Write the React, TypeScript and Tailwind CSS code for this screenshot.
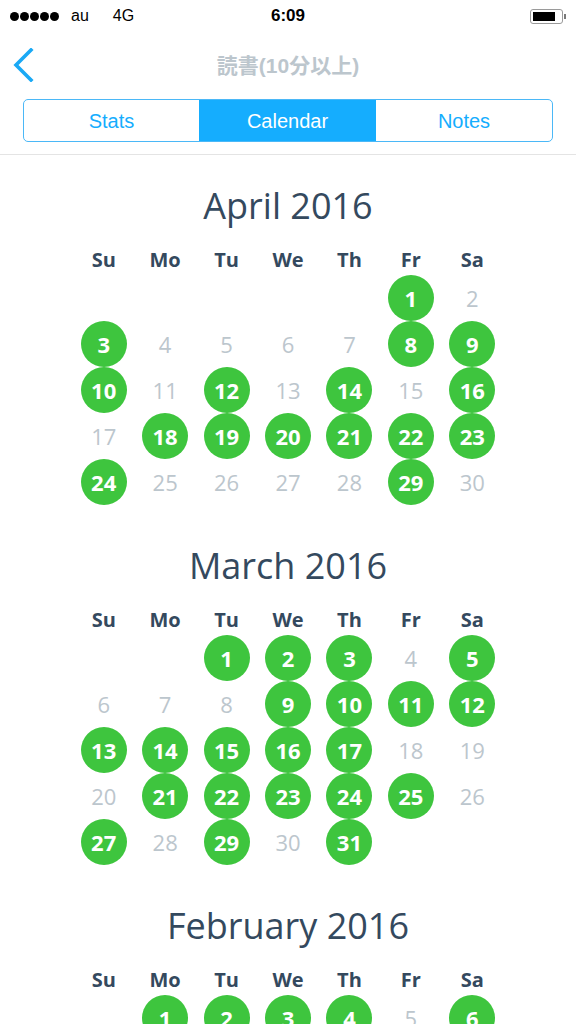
import React from "react";

type Month = { title: string; startDay: number; days: number; done: number[] };

const months: Month[] = [
  { title: "April 2016", startDay: 5, days: 30, done: [1, 3, 8, 9, 10, 12, 14, 16, 18, 19, 20, 21, 22, 23, 24, 29] },
  { title: "March 2016", startDay: 2, days: 31, done: [1, 2, 3, 5, 9, 10, 11, 12, 13, 14, 15, 16, 17, 21, 22, 23, 24, 25, 27, 29, 31] },
  { title: "February 2016", startDay: 1, days: 29, done: [1, 2, 3, 4, 6, 7, 8, 10, 11, 12, 14, 15, 17, 18, 20, 21, 22, 24, 25, 27, 28] },
];

const dayNames = ["Su", "Mo", "Tu", "We", "Th", "Fr", "Sa"];

function MonthBlock({ m }: { m: Month }) {
  const cells: (number | null)[] = [];
  for (let i = 0; i < m.startDay; i++) cells.push(null);
  for (let d = 1; d <= m.days; d++) cells.push(d);
  return (
    <div className="pb-[36px]">
      <div className="h-[50px] mb-[14px] flex items-center justify-center text-[36px] text-[#34495e] leading-none">
        {m.title}
      </div>
      <div className="w-[430px] mx-auto grid grid-cols-7">
        {dayNames.map((d) => (
          <div key={d} className="h-[30px] flex items-center justify-center text-[20px] font-bold text-[#34495e]">
            {d}
          </div>
        ))}
        {cells.map((d, i) => (
          <div key={i} className="h-[46px] flex items-center justify-center">
            {d === null ? null : m.done.includes(d) ? (
              <div className="w-[46px] h-[46px] rounded-full bg-[#3ec53e] flex items-center justify-center text-white font-bold text-[22px] leading-none">
                {d}
              </div>
            ) : (
              <span className="text-[22px] text-[#bcc6cd] leading-none">{d}</span>
            )}
          </div>
        ))}
      </div>
    </div>
  );
}

export default function App() {
  return (
    <div className="w-[576px] h-[1024px] overflow-hidden bg-white" style={{ fontFamily: '"Open Sans", sans-serif' }}>
      {/* status bar */}
      <div className="h-[32px] relative flex items-center px-[10px] text-black" style={{ fontFamily: '"Liberation Sans", Arial, sans-serif' }}>
        <div className="flex items-center gap-[1px]">
          {[0, 1, 2, 3, 4].map((i) => (
            <div key={i} className="w-[9px] h-[9px] rounded-full bg-black" />
          ))}
        </div>
        <span className="ml-[12px] text-[16px]">au</span>
        <span className="ml-[24px] text-[16px]">4G</span>
        <div className="absolute left-0 right-0 top-0 h-[32px] flex items-center justify-center text-[17px] font-bold pointer-events-none">
          6:09
        </div>
        <div className="ml-auto flex items-center">
          <div className="w-[33px] h-[15px] border border-[#9a9a9a] rounded-[3px] p-[2px]">
            <div className="w-[22px] h-full bg-black" />
          </div>
          <div className="w-[2px] h-[5px] bg-[#7a7a7a] ml-[1px]" />
        </div>
      </div>
      {/* nav */}
      <div className="h-[67px] relative flex items-center justify-center">
        <svg className="absolute left-[12px] top-[16px]" width="22" height="34" viewBox="0 0 22 34">
          <path d="M19 2 L4 17 L19 32" fill="none" stroke="#1aa9f5" strokeWidth="3.6" strokeLinecap="square" />
        </svg>
        <div
          className="text-[21px] font-bold text-[#bcc6cd]"
          style={{ fontFamily: '"Liberation Sans", "Noto Sans CJK JP", sans-serif' }}
        >
          読書(10分以上)
        </div>
      </div>
      {/* segmented */}
      <div
        className="mx-[23px] h-[43px] border border-[#4bb8f7] rounded-[5px] flex overflow-hidden text-[20px]"
        style={{ fontFamily: '"Liberation Sans", Arial, sans-serif' }}
      >
        <div className="w-[175px] flex items-center justify-center text-[#15adfe]">Stats</div>
        <div className="w-[177px] flex items-center justify-center bg-[#15adfe] text-white">Calendar</div>
        <div className="flex-1 flex items-center justify-center text-[#15adfe]">Notes</div>
      </div>
      <div className="mt-[12px] h-[1px] bg-[#e4e4e4]" />
      <div className="pt-[26px]">
        {months.map((m) => (
          <MonthBlock key={m.title} m={m} />
        ))}
      </div>
    </div>
  );
}
